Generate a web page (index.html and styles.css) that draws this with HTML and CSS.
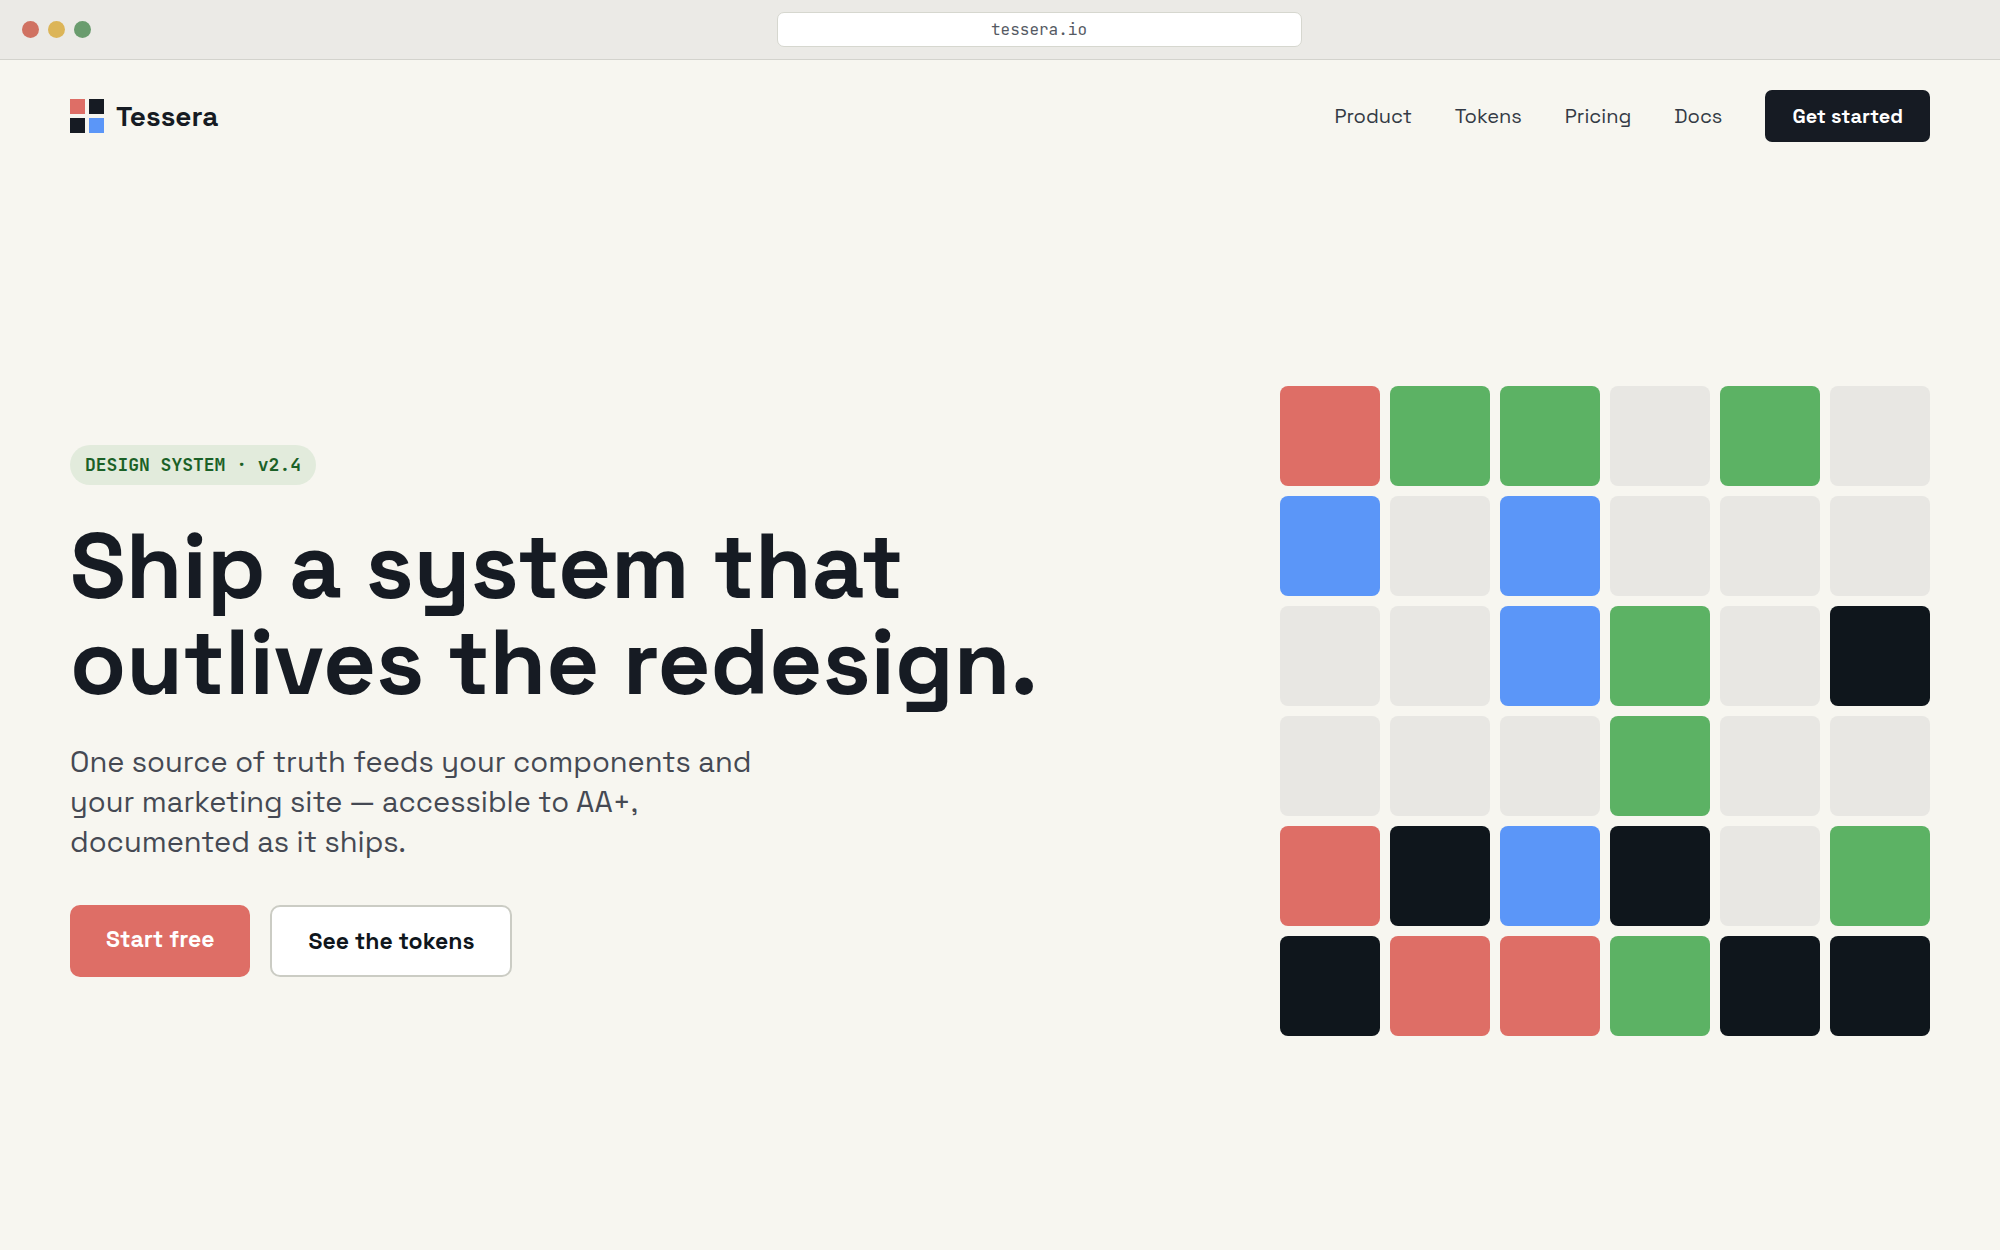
FILE: index.html
```
<!DOCTYPE html>
<html lang="en">

<head>
    <meta charset="utf-8">
    <meta name="viewport" content="width=device-width, initial-scale=1">
    <title>Tessera</title>
    <link rel="stylesheet" href="styles.css">
</head>

<body>
    <div class="chrome">
        <span class="dot dot-red"></span>
        <span class="dot dot-yellow"></span>
        <span class="dot dot-green"></span>
        <input class="address" type="text" value="tessera.io" aria-label="Address" readonly>
    </div>

    <header class="header">
        <a class="brand" href="#">
            <svg class="logo" viewBox="0 0 34 34" aria-hidden="true">
                <rect width="15" height="15" fill="#de6e66"/>
                <rect x="19" width="15" height="15" fill="#161b23"/>
                <rect y="19" width="15" height="15" fill="#161b23"/>
                <rect x="19" y="19" width="15" height="15" fill="#5b96f8"/>
            </svg>
            Tessera
        </a>
        <nav class="nav">
            <a href="#product">Product</a>
            <a href="#tokens">Tokens</a>
            <a href="#pricing">Pricing</a>
            <a href="#docs">Docs</a>
            <a class="nav-button" href="#start">Get started</a>
        </nav>
    </header>

    <main class="hero">
        <div class="intro">
            <span class="badge">DESIGN SYSTEM · v2.4</span>
            <h1>Ship a system that<br>outlives the redesign.</h1>
            <p>One source of truth feeds your components and<br>your marketing site — accessible to AA+,<br>documented as it ships.</p>
            <div class="actions">
                <a class="button button-primary" href="#start">Start free</a>
                <a class="button button-outline" href="#tokens">See the tokens</a>
            </div>
        </div>

        <div class="mosaic" aria-hidden="true">
            <i class="coral"></i><i class="green"></i><i class="green"></i><i></i><i class="green"></i><i></i>
            <i class="blue"></i><i></i><i class="blue"></i><i></i><i></i><i></i>
            <i></i><i></i><i class="blue"></i><i class="green"></i><i></i><i class="ink"></i>
            <i></i><i></i><i></i><i class="green"></i><i></i><i></i>
            <i class="coral"></i><i class="ink"></i><i class="blue"></i><i class="ink"></i><i></i><i class="green"></i>
            <i class="ink"></i><i class="coral"></i><i class="coral"></i><i class="green"></i><i class="ink"></i><i class="ink"></i>
        </div>
    </main>
</body>
</html>
```
FILE: styles.css
```
* {
    box-sizing: border-box;
}

body {
    margin: 0;
    min-height: 100vh;
    display: flex;
    flex-direction: column;
    background: #f7f6f0;
    color: #161b23;
    font-family: "Space Grotesk", Inter, sans-serif;
}

a {
    color: inherit;
    text-decoration: none;
}

/* browser bar */
.chrome {
    display: flex;
    align-items: center;
    gap: 9px;
    padding: 12px 22px;
    background: #ebeae6;
    border-bottom: 1px solid #d3d3cd;
}

.dot {
    width: 17px;
    height: 17px;
    border-radius: 50%;
}

.dot-red {
    background: #d07262;
}

.dot-yellow {
    background: #dcb558;
}

.dot-green {
    background: #6a9c6e;
}

.address {
    width: 525px;
    height: 35px;
    margin: 0 auto;
    padding: 0 12px;
    border: 1px solid #d6d7cf;
    border-radius: 7px;
    background: #fff;
    color: #555a63;
    font-family: "JetBrains Mono", "DejaVu Sans Mono", monospace;
    font-size: 16px;
    text-align: center;
}

/* site header */
.header {
    display: flex;
    align-items: center;
    justify-content: space-between;
    padding: 30px 70px;
}

.brand {
    display: flex;
    align-items: center;
    gap: 12px;
    font-size: 28px;
    font-weight: 600;
}

.logo {
    width: 34px;
    height: 34px;
}

.nav {
    display: flex;
    align-items: center;
    gap: 43px;
    color: #333a44;
    font-size: 20px;
}

.nav-button {
    padding: 0 27px;
    border-radius: 7px;
    background: #161b23;
    color: #fff;
    font-weight: 700;
    line-height: 52px;
}

/* hero */
.hero {
    flex: 1;
    display: flex;
    align-items: center;
    justify-content: space-between;
    gap: 60px;
    padding: 0 70px;
}

.badge {
    display: inline-block;
    padding: 0 15px;
    border-radius: 20px;
    background: #e2ebdc;
    color: #1b6127;
    font-family: "JetBrains Mono", "DejaVu Sans Mono", monospace;
    font-size: 18px;
    font-weight: 700;
    line-height: 40px;
}

h1 {
    margin: 33px 0 32px;
    font-size: 92px;
    font-weight: 600;
    line-height: 96px;
}

p {
    margin: 0 0 43px;
    color: #454953;
    font-size: 29px;
    line-height: 40px;
}

.actions {
    display: flex;
    gap: 20px;
}

.button {
    padding: 20px 36px;
    border-radius: 10px;
    font-size: 23px;
    font-weight: 600;
    line-height: 28px;
}

.button-primary {
    background: #de6e66;
    color: #fff;
}

.button-outline {
    border: 2px solid #cbccc4;
    background: #fff;
    color: #0f161c;
}

.mosaic {
    flex: none;
    display: grid;
    grid-template-columns: repeat(6, 100px);
    grid-auto-rows: 100px;
    gap: 10px;
}

.mosaic i {
    border-radius: 8px;
    background: #e8e7e3;
}

.mosaic .coral {
    background: #de6e66;
}

.mosaic .green {
    background: #5cb264;
}

.mosaic .blue {
    background: #5b96f8;
}

.mosaic .ink {
    background: #0f161c;
}
```
